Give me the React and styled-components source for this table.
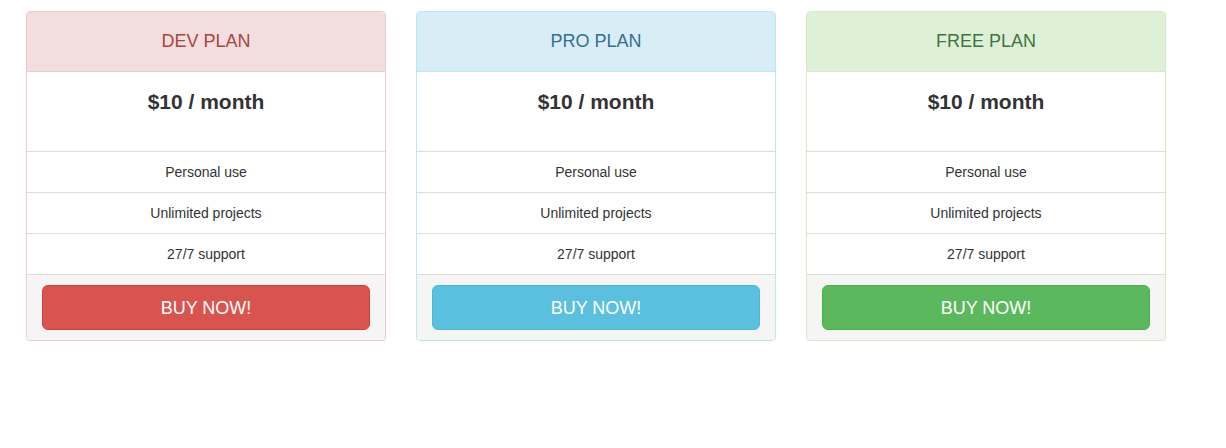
import React from "react";
import styled, { createGlobalStyle } from "styled-components";

const GlobalStyle = createGlobalStyle`
  * { box-sizing: border-box; }
  body {
    margin: 0;
    background: #fff;
    font-family: "Liberation Sans", Arial, sans-serif;
    font-size: 14px;
    color: #333;
  }
`;

const themes = {
  danger: { head: "#f2dede", text: "#a94442", border: "#ebccd1", btn: "#d9534f", btnBorder: "#d43f3a" },
  info: { head: "#d9edf7", text: "#31708f", border: "#bce8f1", btn: "#5bc0de", btnBorder: "#46b8da" },
  success: { head: "#dff0d8", text: "#3c763d", border: "#d6e9c6", btn: "#5cb85c", btnBorder: "#4cae4c" },
};

const Page = styled.div`
  padding: 11px 0 0 26px;
  display: grid;
  grid-template-columns: repeat(3, 360px);
  column-gap: 30px;
  align-items: start;
`;

const Panel = styled.div`
  border: 1px solid ${({ $t }) => themes[$t].border};
  border-radius: 4px;
  box-shadow: 0 1px 1px rgba(0, 0, 0, 0.05);
  background: #fff;
  overflow: hidden;
`;

const Heading = styled.div`
  background: ${({ $t }) => themes[$t].head};
  color: ${({ $t }) => themes[$t].text};
  border-bottom: 1px solid ${({ $t }) => themes[$t].border};
  text-align: center;
  font-size: 18px;
  line-height: 22px;
  padding: 18px 15px 19px;
`;

const Price = styled.div`
  height: 79px;
  padding-top: 19px;
  text-align: center;
  font-size: 21px;
  font-weight: bold;
  line-height: 22px;
  color: #333;
`;

const Features = styled.ul`
  list-style: none;
  margin: 0;
  padding: 0;
`;

const Feature = styled.li`
  border-top: 1px solid #ddd;
  padding: 10px 15px;
  line-height: 20px;
  text-align: center;
  font-size: 14px;
`;

const Footer = styled.div`
  background: #f5f5f5;
  border-top: 1px solid #ddd;
  padding: 10px 15px;
`;

const BuyButton = styled.button`
  display: block;
  width: 100%;
  height: 45px;
  border-radius: 6px;
  border: 1px solid ${({ $t }) => themes[$t].btnBorder};
  background: ${({ $t }) => themes[$t].btn};
  color: #fff;
  font-family: "Liberation Sans", Arial, sans-serif;
  font-size: 18px;
  line-height: 24px;
  padding: 9px 16px;
  cursor: pointer;
`;

const plans = [
  { name: "DEV PLAN", t: "danger" },
  { name: "PRO PLAN", t: "info" },
  { name: "FREE PLAN", t: "success" },
];

const features = ["Personal use", "Unlimited projects", "27/7 support"];

export default function App() {
  return (
    <>
      <GlobalStyle />
      <Page>
        {plans.map((p) => (
          <Panel key={p.name} $t={p.t}>
            <Heading $t={p.t}>{p.name}</Heading>
            <Price>$10 / month</Price>
            <Features>
              {features.map((f) => (
                <Feature key={f}>{f}</Feature>
              ))}
            </Features>
            <Footer>
              <BuyButton $t={p.t}>BUY NOW!</BuyButton>
            </Footer>
          </Panel>
        ))}
      </Page>
    </>
  );
}
